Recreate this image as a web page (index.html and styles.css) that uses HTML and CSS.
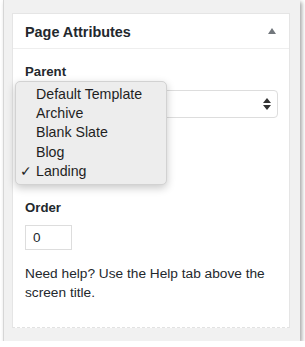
FILE: index.html
```html
<!DOCTYPE html>
<html lang="en">
<head>
    <meta charset="UTF-8">
    <title>Page Attributes</title>
    <link rel="stylesheet" href="styles.css">
</head>
<body>
    <div class="frame">
        <div class="postbox">
            <div class="hndle">
                <h2>Page Attributes</h2>
                <span class="toggle"></span>
            </div>
            <div class="inside">
                <p class="label">Parent</p>
                <div class="select-wrap">
                    <div class="select">
                        <svg class="arrows" width="8" height="12" viewBox="0 0 8 12"><path d="M4 0 L8 5 H0 Z M0 7 H8 L4 12 Z" fill="#333"/></svg>
                    </div>
                    <ul class="menu">
                        <li>Default Template</li>
                        <li>Archive</li>
                        <li>Blank Slate</li>
                        <li>Blog</li>
                        <li class="checked">Landing</li>
                    </ul>
                </div>
                <p class="label order-label">Order</p>
                <div class="num">0</div>
                <p class="help">Need help? Use the Help tab above the screen title.</p>
            </div>
        </div>
    </div>
</body>
</html>
```

FILE: styles.css
```css
* {
    margin: 0;
    padding: 0;
    box-sizing: border-box;
}

body {
    background: #fff;
    font-family: 'Liberation Sans', Arial, sans-serif;
    color: #23282d;
}

.frame {
    margin-left: 3px;
    width: 297px;
    height: 341px;
    background: #f1f1f1;
    border-left: 1px solid #d6d6d6;
    box-shadow: 2px 2px 4px rgba(0, 0, 0, 0.35);
    padding: 13px 10px 0 8px;
}

.postbox {
    background: #fff;
    border: 1px solid #e5e5e5;
    border-bottom: 1px dashed #e2e2e2;
    height: 315px;
}

.hndle {
    height: 35px;
    border-bottom: 1px solid #eee;
    display: flex;
    align-items: center;
    justify-content: space-between;
    padding: 0 13px 0 12px;
}

.hndle h2 {
    font-size: 14.4px;
    font-weight: bold;
    padding-top: 1px;
}

.toggle {
    width: 0;
    height: 0;
    border-left: 4px solid transparent;
    border-right: 4px solid transparent;
    border-bottom: 6px solid #72777c;
}

.inside {
    padding: 15px 11px 0 12px;
}

.label {
    font-size: 13.2px;
    font-weight: bold;
    line-height: 16px;
}

.select-wrap {
    position: relative;
    margin-top: 10px;
}

.select {
    height: 28px;
    border: 1px solid #ddd;
    border-radius: 4px;
    display: flex;
    align-items: center;
    justify-content: flex-end;
    padding-right: 6px;
}

.menu {
    position: absolute;
    left: -10px;
    top: -9px;
    width: 152px;
    list-style: none;
    background: #ededed;
    border: 1px solid #d2d2d2;
    border-radius: 5px;
    box-shadow: 0 3px 8px rgba(0, 0, 0, 0.22);
    padding: 3px 0 3px;
}

.menu li {
    font-size: 14.2px;
    line-height: 19.2px;
    padding-left: 20px;
    color: #1f1f1f;
    position: relative;
}

.menu li.checked::before {
    content: "\2713";
    position: absolute;
    left: 4px;
    font-size: 14px;
}

.order-label {
    margin-top: 82px;
}

.num {
    margin-top: 9px;
    width: 47px;
    height: 25px;
    border: 1px solid #ddd;
    font-size: 13.5px;
    line-height: 23px;
    padding-left: 7px;
}

.help {
    margin-top: 14px;
    font-size: 13.7px;
    line-height: 19px;
    padding-right: 8px;
}
```
